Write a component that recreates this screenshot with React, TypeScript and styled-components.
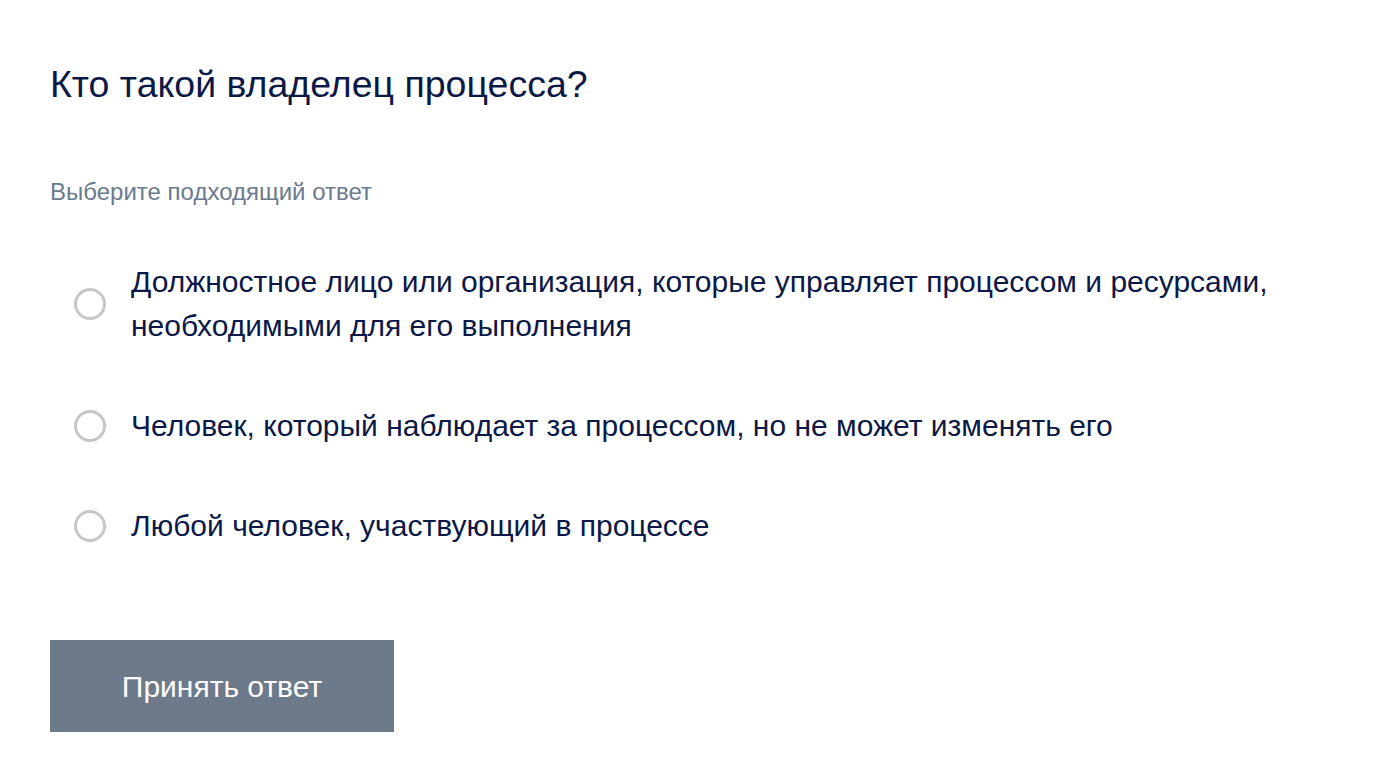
import React from "react";
import styled, { createGlobalStyle } from "styled-components";

const Global = createGlobalStyle`
  html, body { margin: 0; padding: 0; background: #ffffff; }
  body { font-family: "Liberation Sans", Arial, sans-serif; }
`;

const Page = styled.div`
  padding: 62px 50px 0 50px;
  display: flex;
  flex-direction: column;
  align-items: flex-start;
`;

const Title = styled.h1`
  margin: 0;
  font-size: 37.5px;
  line-height: 44px;
  font-weight: 400;
  color: #0c1946;
`;

const Hint = styled.div`
  margin-top: 72px;
  font-size: 24px;
  line-height: 28px;
  color: #6b7a8c;
`;

const Options = styled.div`
  margin-top: 54px;
  display: flex;
  flex-direction: column;
  gap: 56px;
  padding-left: 24px;
`;

const Option = styled.label`
  display: flex;
  align-items: center;
  gap: 25px;
  cursor: pointer;
`;

const Radio = styled.span`
  flex: none;
  width: 26px;
  height: 26px;
  border-radius: 50%;
  border: 3px solid #c6c6c6;
  background: #fff;
`;

const OptionText = styled.span`
  font-size: 30px;
  line-height: 44px;
  color: #0c1946;
  max-width: 1180px;
`;

const Button = styled.button`
  margin-top: 92px;
  width: 344px;
  height: 92px;
  padding: 2px 0 0;
  border: none;
  background: #6c7a8a;
  color: #ffffff;
  font-family: "Liberation Sans", Arial, sans-serif;
  font-size: 30px;
  cursor: pointer;
`;

const options = [
  "Должностное лицо или организация, которые управляет процессом и ресурсами, необходимыми для его выполнения",
  "Человек, который наблюдает за процессом, но не может изменять его",
  "Любой человек, участвующий в процессе",
];

export default function App() {
  return (
    <>
      <Global />
      <Page>
        <Title>Кто такой владелец процесса?</Title>
        <Hint>Выберите подходящий ответ</Hint>
        <Options>
          {options.map((o) => (
            <Option key={o}>
              <Radio />
              <OptionText>{o}</OptionText>
            </Option>
          ))}
        </Options>
        <Button>Принять ответ</Button>
      </Page>
    </>
  );
}
